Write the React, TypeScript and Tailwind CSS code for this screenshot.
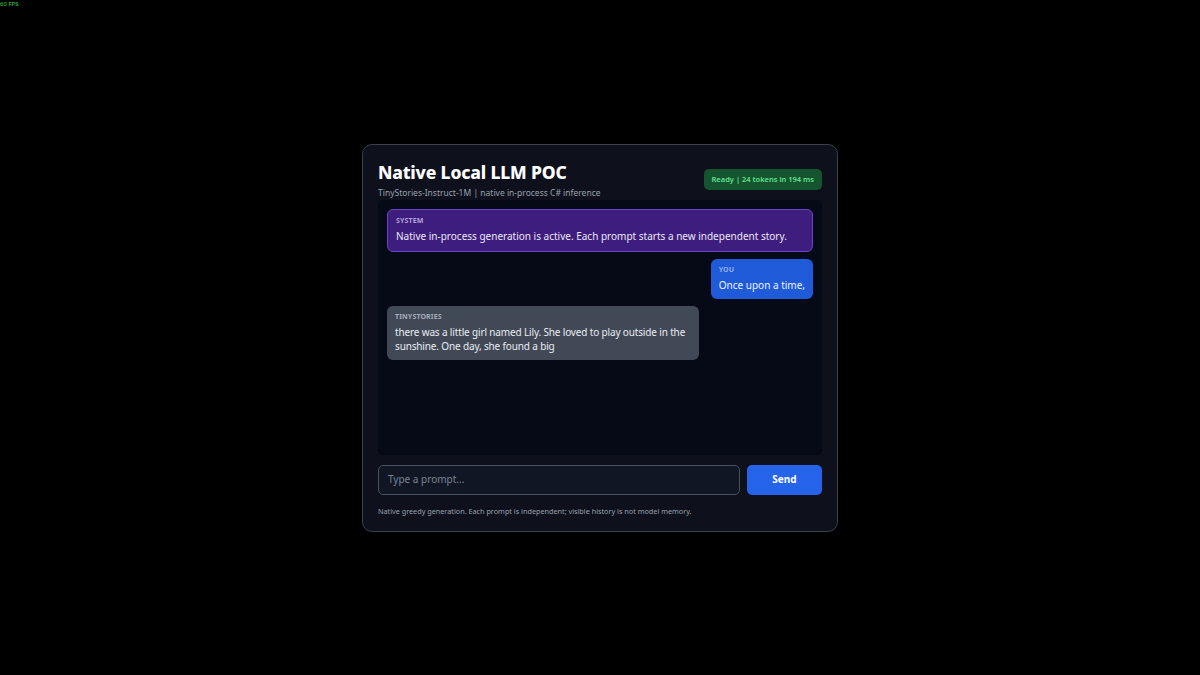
import React from 'react';

const FONT = { fontFamily: '"Noto Sans", "Open Sans", sans-serif' };

type Msg = { role: 'system' | 'you' | 'bot'; label: string; text: string };

const MESSAGES: Msg[] = [
  { role: 'system', label: 'SYSTEM', text: 'Native in-process generation is active. Each prompt starts a new independent story.' },
  { role: 'you', label: 'YOU', text: 'Once upon a time,' },
  {
    role: 'bot',
    label: 'TINYSTORIES',
    text: 'there was a little girl named Lily. She loved to play outside in the sunshine. One day, she found a big',
  },
];

function Bubble({ msg }: { msg: Msg }) {
  if (msg.role === 'system') {
    return (
      <div className="rounded-[6px] border border-[#6a45c2] bg-[#3d1d7d] px-[8px] pt-[6px] pb-[7px]">
        <div className="text-[7px] font-bold leading-[10px] tracking-[0.02em] text-[#b3a3d8]">{msg.label}</div>
        <div className="mt-[3px] text-[10px] leading-[15px] text-[#ece8f7]">{msg.text}</div>
      </div>
    );
  }
  if (msg.role === 'you') {
    return (
      <div className="flex justify-end">
        <div className="rounded-[6px] bg-[#1f5ad9] px-[8px] pt-[6px] pb-[7px]">
          <div className="text-[7px] font-bold leading-[10px] tracking-[0.02em] text-[#93b0ee]">{msg.label}</div>
          <div className="mt-[3px] text-[10px] leading-[14px] text-[#eef3ff]">{msg.text}</div>
        </div>
      </div>
    );
  }
  return (
    <div className="flex justify-start">
      <div className="max-w-[312px] rounded-[6px] bg-[#414957] px-[8px] pt-[6px] pb-[7px]">
        <div className="text-[7px] font-bold leading-[10px] tracking-[0.02em] text-[#a4abb7]">{msg.label}</div>
        <div className="mt-[3px] text-[10px] leading-[14px] tracking-[-0.015em] text-[#e9ecf1]">{msg.text}</div>
      </div>
    </div>
  );
}

export default function App() {
  return (
    <div className="relative flex h-[675px] w-[1200px] items-center justify-center bg-black" style={FONT}>
      {/* fps overlay */}
      <div className="absolute left-0 top-0 text-[6px] leading-[8px] text-[#3fd24a]">60 FPS</div>

      <div className="flex h-[388px] w-[476px] flex-col rounded-[10px] border border-[#3a3f4b] bg-[#0e111c] px-[15px] pt-[15px] pb-[15px]">
        {/* header */}
        <div className="flex items-start justify-between">
          <div>
            <h1 className="text-[17.5px] font-extrabold leading-[24px] tracking-[-0.01em] text-white">Native Local LLM POC</h1>
            <p className="mt-[3px] text-[8.5px] leading-[11px] text-[#9aa1ad]">
              TinyStories-Instruct-1M | native in-process C# inference
            </p>
          </div>
          <div className="mt-[9px] rounded-[5px] bg-[#14552f] px-[8px] py-[5px] text-[7.5px] font-semibold leading-[11px] text-[#62e08e]">
            Ready | 24 tokens in 194 ms
          </div>
        </div>

        {/* messages */}
        <div className="mt-[2px] flex flex-1 flex-col gap-[7px] rounded-[4px] bg-[#060a16] p-[9px]">
          {MESSAGES.map((m, i) => (
            <Bubble key={i} msg={m} />
          ))}
        </div>

        {/* composer */}
        <div className="mt-[10px] flex gap-[7px]">
          <div className="flex h-[30px] flex-1 items-center rounded-[5px] border border-[#4a505d] bg-[#111625] px-[9px] text-[10px] text-[#7c8391]">
            Type a prompt...
          </div>
          <button className="h-[30px] w-[75px] rounded-[5px] bg-[#2563eb] text-[10px] font-bold text-white">Send</button>
        </div>
        <p className="mt-[11px] text-[7.25px] leading-[10px] text-[#9aa0ab]">
          Native greedy generation. Each prompt is independent; visible history is not model memory.
        </p>
      </div>
    </div>
  );
}
